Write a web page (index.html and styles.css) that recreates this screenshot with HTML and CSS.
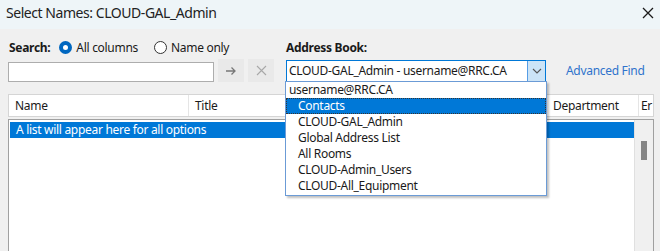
FILE: index.html
```html
<!DOCTYPE html>
<html lang="en">

<head>
    <meta charset="UTF-8">
    <title>Select Names: CLOUD-GAL_Admin</title>
    <link rel="stylesheet" href="styles.css">
</head>

<body>
    <div class="dialog">
        <div class="titlebar">
            <span class="title">Select Names: CLOUD-GAL_Admin</span>
            <svg class="close" width="12" height="12" viewBox="0 0 12 12">
                <path d="M1 1 L11 11 M11 1 L1 11" stroke="#1a1a1a" stroke-width="1.3" fill="none" />
            </svg>
        </div>

        <div class="top">
            <div class="search-col">
                <div class="label-row">
                    <span class="label">Search:</span>
                    <span class="radio checked"></span>
                    <span class="radio-text">All columns</span>
                    <span class="radio"></span>
                    <span class="radio-text">Name only</span>
                </div>
                <div class="input-row">
                    <div class="search-box"></div>
                    <div class="icon-btn">
                        <svg width="12" height="10" viewBox="0 0 12 10">
                            <path d="M1 5 H10 M6.5 1.5 L10 5 L6.5 8.5" stroke="#777" stroke-width="1.3" fill="none" />
                        </svg>
                    </div>
                    <div class="icon-btn">
                        <svg width="11" height="11" viewBox="0 0 11 11">
                            <path d="M1 1 L10 10 M10 1 L1 10" stroke="#a8a8a8" stroke-width="1.1" fill="none" />
                        </svg>
                    </div>
                </div>
            </div>

            <div class="book-col">
                <div class="label-row">
                    <span class="label">Address Book:</span>
                </div>
                <div class="input-row">
                    <div class="combo">
                        <span class="combo-text">CLOUD-GAL_Admin - username@RRC.CA</span>
                        <div class="combo-btn">
                            <svg width="10" height="6" viewBox="0 0 10 6">
                                <path d="M1 1 L5 5 L9 1" stroke="#555" stroke-width="1.1" fill="none" />
                            </svg>
                        </div>
                    </div>
                    <a class="advanced" href="#">Advanced Find</a>
                </div>
            </div>
        </div>

        <div class="results">
            <div class="header">
                <div class="col col-name">Name</div>
                <div class="col col-title">Title</div>
                <div class="col col-dept">Department</div>
                <div class="col col-email">Er</div>
            </div>
            <div class="list">
                <div class="rows">
                    <div class="row selected">A list will appear here for all options</div>
                </div>
                <div class="scrollbar">
                    <div class="thumb"></div>
                </div>
            </div>
        </div>

        <div class="dropdown">
            <div class="item top-item">username@RRC.CA</div>
            <div class="item sub active">Contacts</div>
            <div class="item sub">CLOUD-GAL_Admin</div>
            <div class="item sub">Global Address List</div>
            <div class="item sub">All Rooms</div>
            <div class="item sub">CLOUD-Admin_Users</div>
            <div class="item sub">CLOUD-All_Equipment</div>
        </div>
    </div>
</body>

</html>
```

FILE: styles.css
```css
body {
    margin: 0;
    font-family: "Noto Sans", "Open Sans", sans-serif;
    font-size: 12px;
    letter-spacing: -0.3px;
    color: #1a1a1a;
}

.dialog {
    position: relative;
    width: 660px;
    height: 251px;
    background-color: #f0f0f0;
    overflow: hidden;
}

.titlebar {
    height: 29px;
    background-color: #eef5f8;
    display: flex;
    align-items: center;
    justify-content: space-between;
    padding: 0 6px 4px 6px;
    box-sizing: border-box;
}

.title {
    font-size: 14px;
    letter-spacing: -0.45px;
    color: #222;
}

.top {
    display: flex;
    padding: 10px 0 0 8px;
}

.search-col {
    width: 266px;
}

.book-col {
    margin-left: 12px;
}

.label-row {
    display: flex;
    align-items: center;
    height: 16px;
}

.label {
    font-weight: bold;
    margin-right: 9px;
}

.search-col .label {
    margin-left: 1px;
}

.radio {
    width: 13px;
    height: 13px;
    box-sizing: border-box;
    border: 1px solid #333;
    border-radius: 50%;
    background-color: #fff;
    margin-right: 4px;
}

.radio.checked {
    border: 4px solid #0067c0;
}

.radio-text {
    margin-right: 16px;
}

.input-row {
    display: flex;
    align-items: center;
    margin-top: 4px;
    height: 23px;
}

.search-box {
    width: 206px;
    height: 20px;
    box-sizing: border-box;
    background-color: #fff;
    border: 1px solid #adadad;
    margin-top: 2px;
}

.icon-btn {
    width: 26px;
    height: 23px;
    background-color: #e9e9e9;
    margin-left: 4px;
    display: flex;
    align-items: center;
    justify-content: center;
}

.icon-btn:first-of-type {
    margin-left: 3px;
}

.combo {
    width: 260px;
    height: 22px;
    box-sizing: border-box;
    border: 1px solid #0078d7;
    background-color: #fff;
    display: flex;
    align-items: center;
}

.combo-text {
    flex: 1;
    padding-left: 2px;
    white-space: nowrap;
}

.combo-btn {
    width: 18px;
    height: 20px;
    box-sizing: border-box;
    background-color: #cce4f7;
    border-left: 1px solid #569de5;
    display: flex;
    align-items: center;
    justify-content: center;
}

.advanced {
    margin-left: 20px;
    color: #2f73cc;
    text-decoration: none;
}

.results {
    margin: 12px 6px 0 8px;
}

.header {
    display: flex;
    height: 23px;
    box-sizing: border-box;
    background-color: #fff;
    border: 1px solid #d5d5d5;
}

.col {
    display: flex;
    align-items: center;
    padding-left: 6px;
    border-right: 1px solid #e5e5e5;
    box-sizing: border-box;
}

.col-name {
    width: 180px;
}

.col-title {
    width: 358px;
}

.col-dept {
    width: 92px;
}

.col-email {
    flex: 1;
    border-right: none;
    padding-left: 2px;
}

.list {
    margin-top: 2px;
    height: 140px;
    border: 1px solid #a0a0a0;
    background-color: #fff;
    display: flex;
}

.rows {
    flex: 1;
    padding: 2px 0 0 1px;
}

.row {
    height: 16px;
    line-height: 16px;
    padding-left: 6px;
}

.row.selected {
    background-color: #0078d7;
    color: #fff;
}

.scrollbar {
    width: 18px;
    background-color: #f0f0f0;
    border-left: 1px solid #e0e0e0;
}

.thumb {
    width: 6px;
    height: 19px;
    margin: 21px 0 0 6px;
    background-color: #858585;
}

.dropdown {
    position: absolute;
    left: 285px;
    top: 81px;
    width: 262px;
    box-sizing: border-box;
    border: 1px solid #6b9bd6;
    background-color: #fff;
    box-shadow: 2px 2px 2px rgba(0, 0, 0, 0.25);
    padding-bottom: 1px;
}

.item {
    height: 16px;
    line-height: 16px;
    padding-left: 3px;
    white-space: nowrap;
}

.item.sub {
    padding-left: 12px;
}

.item.active {
    background-color: #0078d7;
    color: #fff;
    outline: 1px dotted #333;
    outline-offset: -1px;
}
```
